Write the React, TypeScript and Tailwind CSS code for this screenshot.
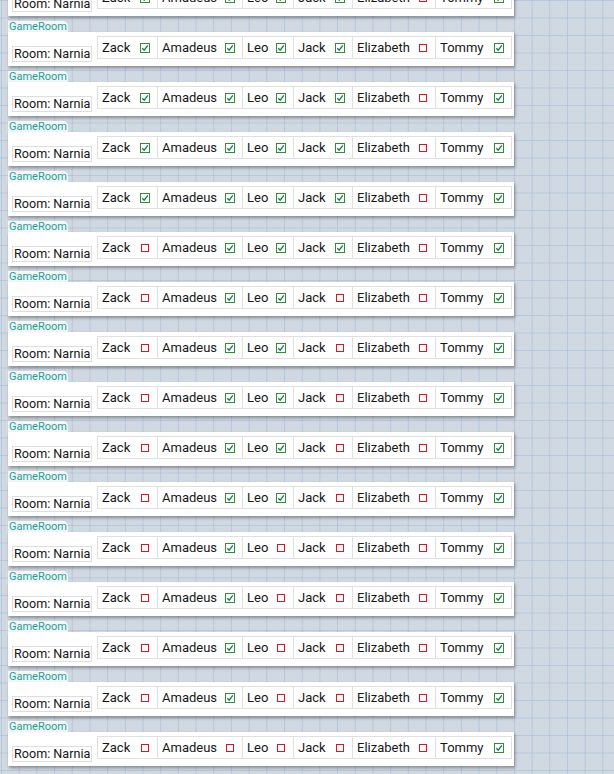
import React from "react";

const NAMES = ["Zack", "Amadeus", "Leo", "Jack", "Elizabeth", "Tommy"];
const WIDTHS = ["w-[60px]", "w-[85px]", "w-[51px]", "w-[59px]", "w-[83px]", "w-[75px]"];

// 1 = checked, 0 = unchecked
const ROWS: number[][] = [
  [1, 1, 1, 1, 0, 1],
  [1, 1, 1, 1, 0, 1],
  [1, 1, 1, 1, 0, 1],
  [1, 1, 1, 1, 0, 1],
  [1, 1, 1, 1, 0, 1],
  [0, 1, 1, 1, 0, 1],
  [0, 1, 1, 0, 0, 1],
  [0, 1, 1, 0, 0, 1],
  [0, 1, 1, 0, 0, 1],
  [0, 1, 1, 0, 0, 1],
  [0, 1, 1, 0, 0, 1],
  [0, 1, 0, 0, 0, 1],
  [0, 1, 0, 0, 0, 1],
  [0, 1, 0, 0, 0, 1],
  [0, 1, 0, 0, 0, 1],
  [0, 0, 0, 0, 0, 1],
];

function Check({ on }: { on: boolean }) {
  if (on) {
    return (
      <svg width="10" height="10" viewBox="0 0 10 10" className="block">
        <rect x="0.5" y="0.5" width="9" height="9" fill="#fff" stroke="#2f8f2f" strokeWidth="1" />
        <path d="M2.3 5.2 L4.2 7.2 L7.8 2.4" fill="none" stroke="#0f7a55" strokeWidth="1.3" />
      </svg>
    );
  }
  return (
    <svg width="10" height="10" viewBox="0 0 10 10" className="block">
      <rect x="1.5" y="1.5" width="7" height="7" fill="#fff" stroke="#e0141e" strokeWidth="1" />
    </svg>
  );
}

function Block({ row }: { row: number[] }) {
  return (
    <div className="w-[506px] mb-[5px]">
      <div className="w-[60px] h-[11px] bg-[#f4f6f8] rounded-tr-[5px] pl-[1px] text-[11px] leading-[11px] text-[#1a9f95]">
        GameRoom
      </div>
      <div className="h-[34px] bg-white shadow-[1px_2px_3px_rgba(0,0,0,0.35)] flex items-start">
        <div className="ml-[4px] mt-[14px] w-[80px] h-[16px] border border-[#dedede] bg-white text-[12.6px] leading-[14px] text-[#161616] pl-[1px] whitespace-nowrap">
          Room: Narnia
        </div>
        <div className="ml-[5px] mt-[4px] h-[23px] border border-[#e0e0e0] flex">
          {NAMES.map((n, i) => (
            <div
              key={n}
              className={
                "flex items-center justify-between pl-[4px] pr-[7px] text-[13px] text-[#161616] " +
                WIDTHS[i] +
                (i < NAMES.length - 1 ? " border-r border-[#e0e0e0]" : "")
              }
            >
              <span>{n}</span>
              <Check on={row[i] === 1} />
            </div>
          ))}
        </div>
      </div>
    </div>
  );
}

export default function App() {
  return (
    <div
      className="min-h-screen h-[774px] overflow-hidden bg-[#d0d8e1] bg-[linear-gradient(to_right,rgba(150,180,212,0.45)_1px,transparent_1px),linear-gradient(to_bottom,rgba(150,180,212,0.45)_1px,transparent_1px)] bg-size-[17.7px_17.5px] bg-position-[1px_0px] pl-[8px]"
      style={{ fontFamily: "Roboto, 'Liberation Sans', sans-serif" }}
    >
      <div className="-mt-[29px] flex flex-col">
        {ROWS.map((r, i) => (
          <Block key={i} row={r} />
        ))}
      </div>
    </div>
  );
}
